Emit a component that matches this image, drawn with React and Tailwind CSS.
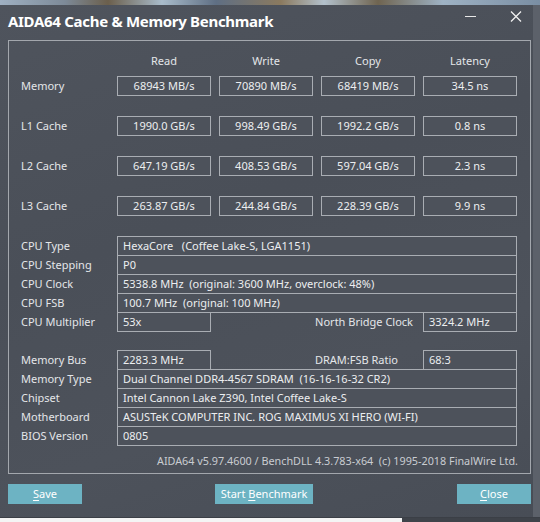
import React from "react";

const font = { fontFamily: '"Noto Sans", "Open Sans", sans-serif' };

const bench = [
  ["Memory", "68943 MB/s", "70890 MB/s", "68419 MB/s", "34.5 ns"],
  ["L1 Cache", "1990.0 GB/s", "998.49 GB/s", "1992.2 GB/s", "0.8 ns"],
  ["L2 Cache", "647.19 GB/s", "408.53 GB/s", "597.04 GB/s", "2.3 ns"],
  ["L3 Cache", "263.87 GB/s", "244.84 GB/s", "228.39 GB/s", "9.9 ns"],
];

function Box({ children, className = "" }) {
  return (
    <div
      className={`h-[20px] border border-[#a9adb3] bg-[#4d525b] flex items-center text-[#eceef0] ${className}`}
    >
      {children}
    </div>
  );
}

function InfoRow({ label, value, first }) {
  return (
    <div className={`flex items-center ${first ? "" : "-mt-px"}`}>
      <div className="w-[96px] text-[#e4e6e9]">{label}</div>
      <Box className="w-[400px] pl-[5px]">{value}</Box>
    </div>
  );
}

function Btn({ children, className = "" }) {
  return (
    <button
      className={`h-[20px] shrink-0 bg-[#6db3c3] text-white text-[11px] flex items-center justify-center ${className}`}
      style={font}
    >
      {children}
    </button>
  );
}

export default function App() {
  return (
    <div
      className="w-[540px] h-[522px] relative overflow-hidden bg-[#555a63] flex flex-col"
      style={font}
    >
      {/* desktop wallpaper peeking above the window */}
      <div className="h-[5px] w-full bg-[linear-gradient(90deg,#9fb0c2_0%,#7d8a98_12%,#6b5f4c_20%,#a9bccb_30%,#5f6f84_40%,#8b7a5f_52%,#b3c1cc_60%,#6f6450_70%,#9eb2c4_82%,#7a8ea3_100%)]" />

      <div className="flex">
        {/* window body */}
        <div className="w-[533px] h-[512px] bg-[linear-gradient(160deg,#4f545d_0%,#4a4f58_40%,#4d525b_70%,#484d56_100%)] flex flex-col">
          {/* title bar */}
          <div className="h-[35px] flex items-start relative">
            <div
              className="ml-[8px] mt-[5px] text-white font-bold text-[15px] tracking-[-0.3px] leading-[22px]"
              style={font}
            >
              AIDA64 Cache &amp; Memory Benchmark
            </div>
            <div className="absolute left-[465px] top-[11px] w-[11px] h-px bg-[#e8e8e8]" />
            <svg
              className="absolute left-[510px] top-[6px]"
              width="12"
              height="11"
              viewBox="0 0 12 11"
            >
              <path d="M1 0.5 L11 10.5 M11 0.5 L1 10.5" stroke="#f0f0f0" strokeWidth="1.3" />
            </svg>
          </div>

          {/* group box */}
          <div className="ml-[8px] w-[523px] h-[434px] border border-[#a3a7ad] flex flex-col px-[12px] text-[11px]">
            {/* column headers */}
            <div className="h-[35px] pt-[5px] flex items-center">
              <div className="w-[96px]" />
              <div className="flex gap-[8px] text-[#e4e6e9]">
                {["Read", "Write", "Copy", "Latency"].map((h) => (
                  <div key={h} className="w-[94px] text-center">
                    {h}
                  </div>
                ))}
              </div>
            </div>

            {/* benchmark rows */}
            <div className="flex flex-col gap-[20px]">
              {bench.map(([label, ...vals]) => (
                <div key={label} className="flex items-center">
                  <div className="w-[96px] text-[#e4e6e9]">{label}</div>
                  <div className="flex gap-[8px]">
                    {vals.map((v, i) => (
                      <Box key={i} className="w-[94px] justify-center">
                        {v}
                      </Box>
                    ))}
                  </div>
                </div>
              ))}
            </div>

            {/* system info */}
            <div className="mt-[20px] flex flex-col">
              <InfoRow first label="CPU Type" value={<span className="whitespace-pre">HexaCore   (Coffee Lake-S, LGA1151)</span>} />
              <InfoRow label="CPU Stepping" value="P0" />
              <InfoRow label="CPU Clock" value={<span className="whitespace-pre">5338.8 MHz  (original: 3600 MHz, overclock: 48%)</span>} />
              <InfoRow label="CPU FSB" value={<span className="whitespace-pre">100.7 MHz  (original: 100 MHz)</span>} />
              <div className="flex items-center -mt-px">
                <div className="w-[96px] text-[#e4e6e9]">CPU Multiplier</div>
                <Box className="w-[94px] pl-[5px]">53x</Box>
                <div className="w-[212px] text-right pr-[10px] text-[#e4e6e9]">North Bridge Clock</div>
                <Box className="w-[94px] pl-[5px]">3324.2 MHz</Box>
              </div>

              <div className="flex items-center mt-[18px]">
                <div className="w-[96px] text-[#e4e6e9]">Memory Bus</div>
                <Box className="w-[94px] pl-[5px]">2283.3 MHz</Box>
                <div className="w-[212px] text-right pr-[25px] text-[#e4e6e9]">DRAM:FSB Ratio</div>
                <Box className="w-[94px] pl-[5px]">68:3</Box>
              </div>
              <InfoRow label="Memory Type" value={<span className="whitespace-pre">Dual Channel DDR4-4567 SDRAM  (16-16-16-32 CR2)</span>} />
              <InfoRow label="Chipset" value="Intel Cannon Lake Z390, Intel Coffee Lake-S" />
              <InfoRow label="Motherboard" value="ASUSTeK COMPUTER INC. ROG MAXIMUS XI HERO (WI-FI)" />
              <InfoRow label="BIOS Version" value="0805" />
            </div>

            <div className="mt-[7px] text-right text-[#c9ccd1] text-[10.8px] whitespace-pre">
              AIDA64 v5.97.4600 / BenchDLL 4.3.783-x64  (c) 1995-2018 FinalWire Ltd.
            </div>
          </div>

          {/* buttons */}
          <div className="mt-[10px] flex items-center pl-[8px]">
            <Btn className="w-[74px]">
              <span className="underline underline-offset-2">S</span>ave
            </Btn>
            <Btn className="w-[98px] ml-[133px]">
              Start&nbsp;<span className="underline underline-offset-2">B</span>enchmark
            </Btn>
            <Btn className="w-[74px] ml-[144px]">
              <span className="underline underline-offset-2">C</span>lose
            </Btn>
          </div>
        </div>
        {/* edge of the window frame */}
        <div className="flex-1 h-[512px] bg-[#5c616a]" />
      </div>

      {/* window bottom edge and what lies below */}
      <div className="h-[1px] bg-[#3b3f46]" />
      <div className="flex-1 flex">
        <div className="w-[402px] bg-[#f4f4f4]" />
        <div className="flex-1 bg-[#3f434a]" />
      </div>
    </div>
  );
}
